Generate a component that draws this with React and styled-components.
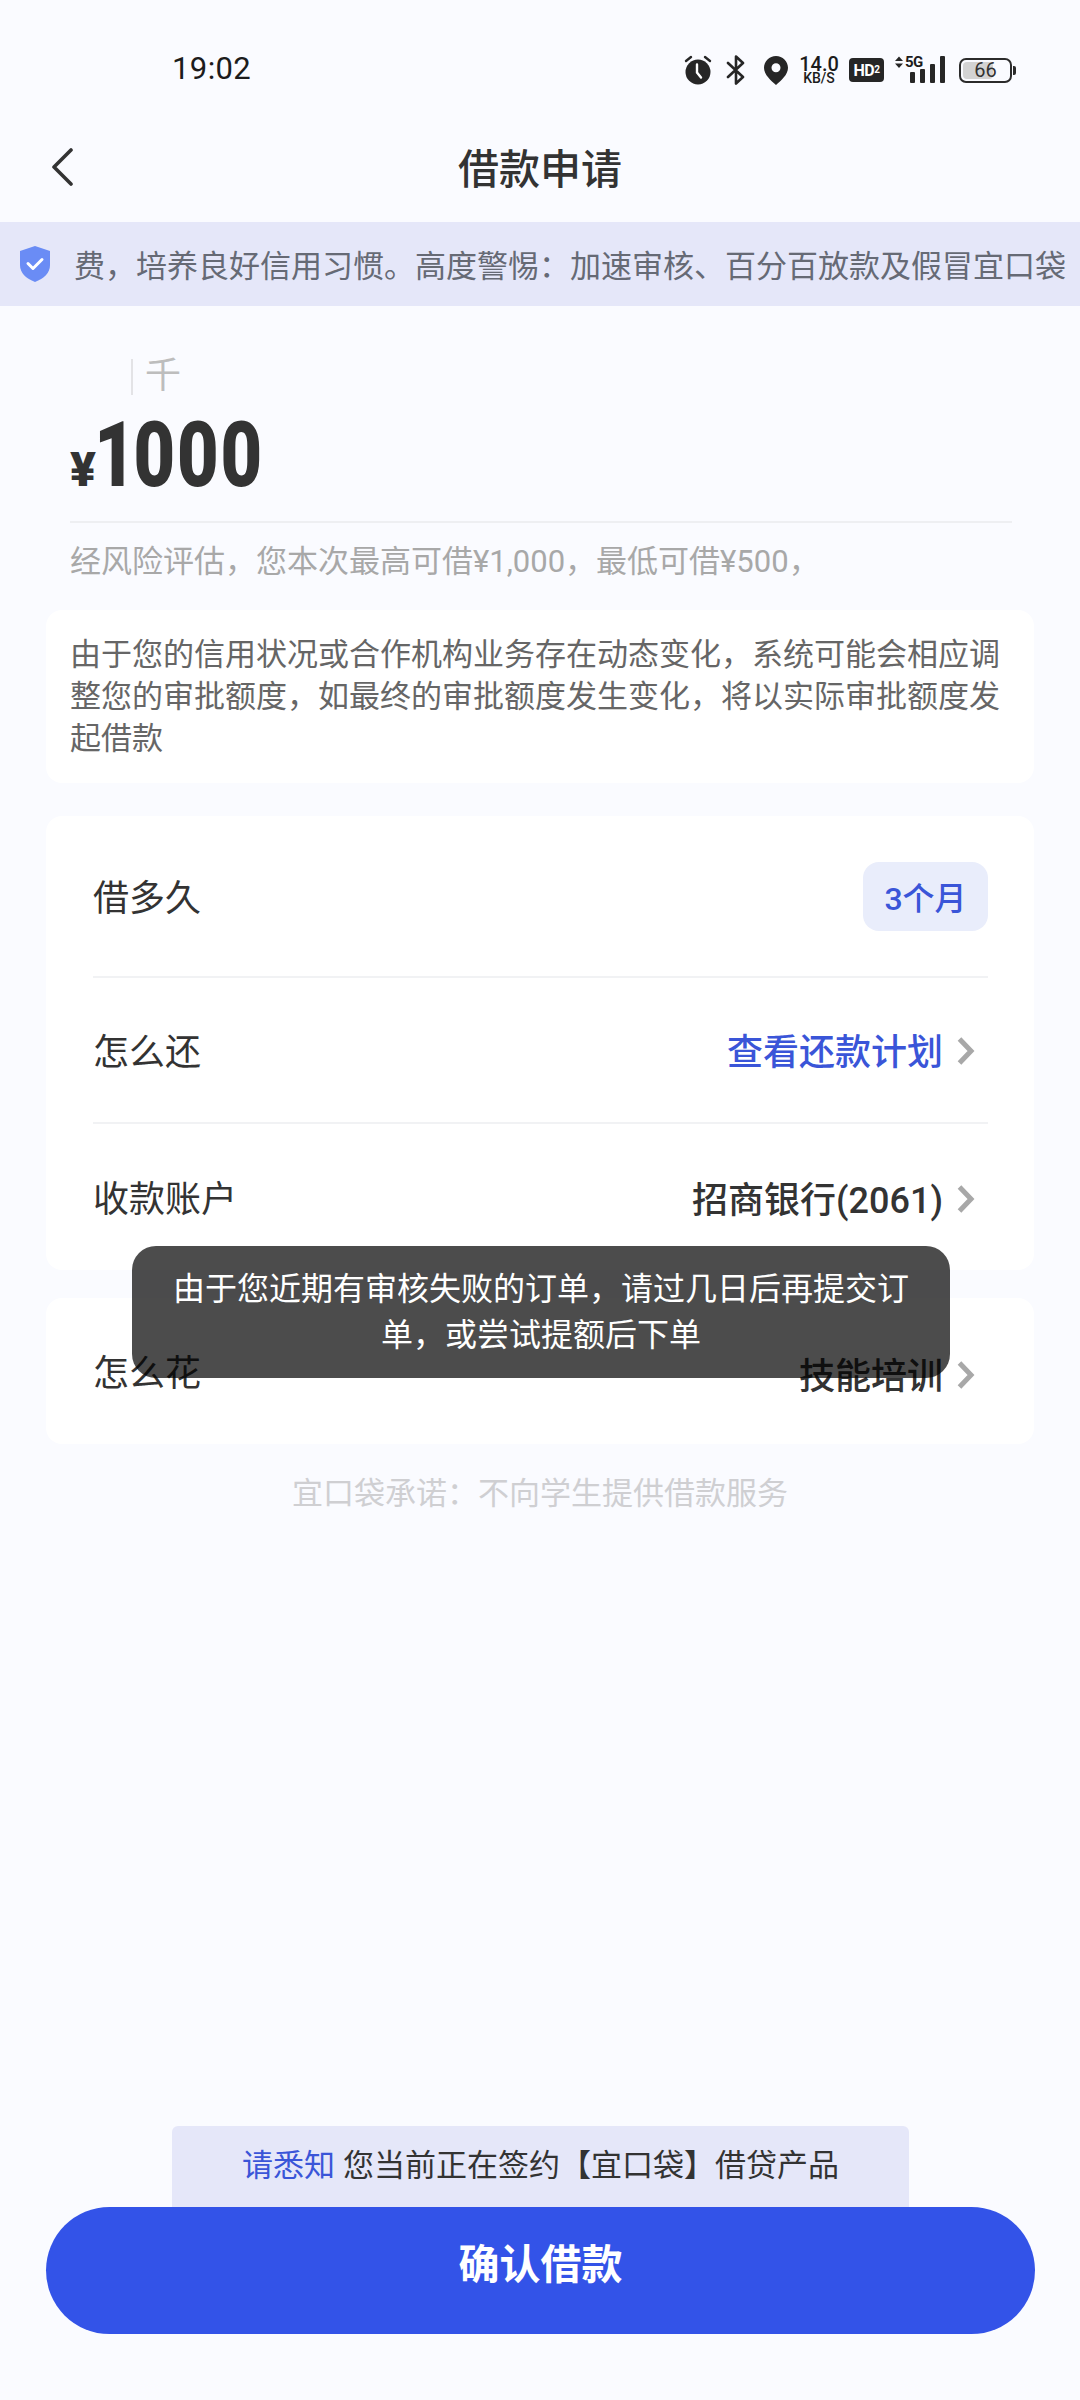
import React from "react";
import styled, { createGlobalStyle } from "styled-components";

const Global = createGlobalStyle`
  html, body { margin: 0; padding: 0; background: #fafbff; }
  * { box-sizing: border-box; }
  body { font-family: Roboto, "Noto Sans CJK SC", sans-serif; }
`;

const Page = styled.div`
  width: 1080px;
  height: 2400px;
  position: relative;
  overflow: hidden;
  display: flex;
  flex-direction: column;
  background: #fafbff;
`;

const StatusBar = styled.div`
  height: 112px;
  padding: 28px 64px 0 172px;
  display: flex;
  align-items: center;
  justify-content: space-between;
  color: #1c1c1c;
`;
const Time = styled.div`
  font-size: 31px;
  font-weight: 400;
  letter-spacing: 0.4px;
  padding-bottom: 3px;
`;
const StatusIcons = styled.div`
  display: flex;
  align-items: center;
  height: 30px;
`;
const Speed = styled.div`
  width: 40px;
  margin: 0 10px 0 11px;
  display: flex;
  flex-direction: column;
  align-items: center;
  font-weight: 500;
  line-height: 1;
`;
const SpeedValue = styled.span`
  font-size: 20px;
  line-height: 16px;
`;
const SpeedUnit = styled.span`
  font-size: 14px;
  line-height: 13px;
`;
const HdBadge = styled.div`
  width: 35px;
  height: 24px;
  margin-right: 11px;
  border-radius: 4px;
  background: #262626;
  color: #fff;
  display: flex;
  align-items: center;
  justify-content: center;
  font-size: 16px;
  font-weight: 700;
  letter-spacing: -0.5px;
  sub {
    font-size: 10px;
    line-height: 1;
    vertical-align: -1px;
  }
`;
const Signal = styled.div`
  width: 50px;
  height: 28px;
  margin-right: 14px;
  position: relative;
`;
const FiveG = styled.span`
  position: absolute;
  left: 10px;
  top: -1px;
  font-size: 15px;
  line-height: 14px;
  font-weight: 700;
  letter-spacing: -0.5px;
`;
const Battery = styled.div`
  width: 53px;
  height: 25px;
  border: 2px solid #2b2b2b;
  border-radius: 7px;
  padding: 2px;
  position: relative;
  margin-right: 4px;
  &::after {
    content: "";
    position: absolute;
    right: -6px;
    top: 6px;
    width: 3px;
    height: 9px;
    background: #2b2b2b;
    border-radius: 0 2px 2px 0;
  }
`;
const BatteryFill = styled.div`
  height: 100%;
  border-radius: 4px;
  background: #d3d3d3;
`;
const BatteryText = styled.span`
  position: absolute;
  left: 0;
  right: 0;
  top: 0;
  text-align: center;
  font-size: 20px;
  line-height: 21px;
  color: #333;
`;

const Nav = styled.div`
  height: 110px;
  position: relative;
  display: flex;
  align-items: center;
  justify-content: center;
`;
const BackIcon = styled.svg`
  position: absolute;
  left: 50px;
  top: 36px;
`;
const Title = styled.div`
  font-size: 41px;
  font-weight: 500;
  color: #333;
  padding-bottom: 3px;
`;

const Banner = styled.div`
  height: 84px;
  background: #e5e7f9;
  display: flex;
  align-items: center;
  padding-left: 20px;
  gap: 24px;
  overflow: hidden;
  white-space: nowrap;
`;
const BannerText = styled.div`
  font-size: 31px;
  color: #666a75;
  flex: none;
  padding-bottom: 2px;
`;

const AmountBlock = styled.div`
  padding: 52px 68px 0 70px;
`;
const Tabs = styled.div`
  height: 37px;
  display: flex;
  align-items: center;
  padding-left: 61px;
  gap: 12px;
`;
const TabCursor = styled.div`
  width: 2px;
  height: 36px;
  background: #e3e3e6;
`;
const TabLabel = styled.div`
  font-size: 36px;
  line-height: 37px;
  color: #bdbdbd;
`;
const Amount = styled.div`
  height: 100px;
  margin-top: 11px;
  display: flex;
  align-items: baseline;
  color: #333;
  font-weight: 900;
`;
const Currency = styled.span`
  font-size: 48px;
  line-height: 100px;
`;
const AmountValue = styled.span`
  font-size: 90px;
  line-height: 100px;
  letter-spacing: 0.5px;
  font-variant-numeric: proportional-nums;
  transform: scaleX(0.8);
  transform-origin: left center;
`;
const Rule = styled.div`
  height: 2px;
  margin-top: 15px;
  background: #eeeff2;
`;
const Info = styled.div`
  margin-top: 19px;
  font-size: 31px;
  line-height: 40px;
  color: #a8a8a8;
  white-space: nowrap;
`;

const Card = styled.div`
  margin: ${(p) => p.$top}px 46px 0 46px;
  background: #fff;
  border-radius: 16px;
  position: relative;
`;
const Notice = styled.div`
  padding: 24px 24px 24px;
  font-size: 31px;
  line-height: 42px;
  color: #666;
  height: 173px;
`;
const Row = styled.div`
  height: ${(p) => p.$h}px;
  margin: 0 46px 0 47px;
  display: flex;
  align-items: center;
  justify-content: space-between;
  border-bottom: ${(p) => (p.$line ? "2px solid #f1f2f4" : "0")};
`;
const Label = styled.div`
  font-size: 36px;
  color: #333;
  padding-bottom: 3px;
`;
const Value = styled.div`
  display: flex;
  align-items: center;
  gap: 14px;
  padding: ${(p) => (p.$shift > 0 ? p.$shift : 0)}px 13px ${(p) => (p.$shift < 0 ? -p.$shift : 0)}px 0;
  font-size: 36px;
  font-weight: 500;
  color: ${(p) => p.$color || "#333"};
  svg {
    margin-top: 4px;
  }
`;
const Chip = styled.div`
  width: 125px;
  height: 69px;
  border-radius: 16px;
  background: #e9edfb;
  color: #3a55d8;
  font-size: 32px;
  font-weight: 500;
  display: flex;
  align-items: center;
  justify-content: center;
`;
const Toast = styled.div`
  position: absolute;
  left: 132px;
  top: 1246px;
  width: 818px;
  height: 132px;
  padding: 20px 40px;
  background: rgba(0, 0, 0, 0.7);
  border-radius: 24px;
  color: #fff;
  font-size: 32px;
  line-height: 46px;
  text-align: center;
`;
const Promise = styled.div`
  margin-top: 29px;
  text-align: center;
  font-size: 31px;
  line-height: 42px;
  color: #cfcfd2;
`;

const Footer = styled.div`
  margin-top: auto;
  padding: 0 45px 66px 46px;
  display: flex;
  flex-direction: column;
  align-items: center;
`;
const Consent = styled.div`
  width: 737px;
  height: 81px;
  padding-bottom: 8px;
  background: #e5e7f9;
  border-radius: 6px 6px 0 0;
  display: flex;
  align-items: center;
  justify-content: center;
  font-size: 31px;
  color: #333;
  gap: 8px;
`;
const ConsentLink = styled.span`
  color: #3a55d8;
`;
const SubmitButton = styled.button`
  width: 100%;
  height: 127px;
  border: 0;
  padding: 0 0 20px;
  border-radius: 64px;
  background: #3353e8;
  color: #fff;
  font-family: inherit;
  font-size: 41px;
  font-weight: 700;
`;

const Chevron = () => (
  <svg width="18" height="28" viewBox="0 0 18 28" fill="none">
    <path d="M2.500 2L14 14 2.500 26" stroke="#a8a8a8" strokeWidth="5" />
  </svg>
);

const Alarm = () => (
  <svg width="28" height="30" viewBox="0 0 28 30" style={{ marginRight: 14 }}>
    <circle cx="14" cy="17" r="12.500" fill="#262626" />
    <path d="M2 6l5-4M26 6l-5-4" stroke="#262626" strokeWidth="2.400" strokeLinecap="round" />
    <path d="M13 9.500v8l4 5" stroke="#fff" strokeWidth="2.400" fill="none" strokeLinecap="round" />
  </svg>
);
const Bluetooth = () => (
  <svg width="20" height="30" viewBox="0 0 20 30" style={{ marginRight: 18 }}>
    <path d="M2 8l15 14-7 6.500V1.500L17 8 2 22" fill="none" stroke="#262626" strokeWidth="2.600" strokeLinejoin="round" strokeLinecap="round" />
  </svg>
);
const Pin = () => (
  <svg width="24" height="29" viewBox="0 0 24 29">
    <path fillRule="evenodd" d="M12 0C5.400 0 0 5.200 0 11.800 0 19 7 24.500 12 29c5-4.500 12-10 12-17.200C24 5.200 18.600 0 12 0zm0 7.300a4.500 4.500 0 1 1 0 9 4.500 4.500 0 0 1 0-9z" fill="#262626" />
  </svg>
);
const SignalArt = () => (
  <svg width="50" height="28" viewBox="0 0 50 28" style={{ position: "absolute", left: 0, top: 0 }}>
    <path d="M0 5l4-4.500L8 5zM0 7.500l4 4.500 4-4.500z" fill="#262626" />
    <rect x="15" y="16" width="5" height="11" rx="1" fill="#262626" />
    <rect x="25" y="13" width="5" height="14" rx="1" fill="#262626" />
    <rect x="35" y="8" width="5" height="19" rx="1" fill="#262626" />
    <rect x="45" y="0" width="5" height="27" rx="1" fill="#262626" />
  </svg>
);

const Shield = () => (
  <svg width="30" height="36" viewBox="0 0 30 36" style={{ flex: "none" }}>
    <path d="M15 0l15 5v14c0 8-6 13.500-15 17C6 32.500 0 27 0 19V5z" fill="#6a8cf5" />
    <path d="M8 17.500l5 5 9-9" fill="none" stroke="#fff" strokeWidth="3" strokeLinecap="round" strokeLinejoin="round" />
  </svg>
);

export default function App() {
  return (
    <Page>
      <Global />
      <StatusBar>
        <Time>19:02</Time>
        <StatusIcons>
          <Alarm />
          <Bluetooth />
          <Pin />
          <Speed>
            <SpeedValue>14.0</SpeedValue>
            <SpeedUnit>KB/S</SpeedUnit>
          </Speed>
          <HdBadge>
            HD<sub>2</sub>
          </HdBadge>
          <Signal>
            <SignalArt />
            <FiveG>5G</FiveG>
          </Signal>
          <Battery>
            <BatteryFill style={{ width: "66%" }} />
            <BatteryText>66</BatteryText>
          </Battery>
        </StatusIcons>
      </StatusBar>
      <Nav>
        <BackIcon width="24" height="38" viewBox="0 0 24 38" fill="none">
          <path d="M21 2L4 19l17 17" stroke="#333" strokeWidth="3.600" strokeLinecap="round" strokeLinejoin="round" />
        </BackIcon>
        <Title>借款申请</Title>
      </Nav>
      <Banner>
        <Shield />
        <BannerText>费，培养良好信用习惯。高度警惕：加速审核、百分百放款及假冒宜口袋</BannerText>
      </Banner>
      <AmountBlock>
        <Tabs>
          <TabCursor />
          <TabLabel>千</TabLabel>
        </Tabs>
        <Amount>
          <Currency>¥</Currency>
          <AmountValue>1000</AmountValue>
        </Amount>
        <Rule />
        <Info>经风险评估，您本次最高可借¥1,000，最低可借¥500，</Info>
      </AmountBlock>
      <Card $top={28}>
        <Notice>由于您的信用状况或合作机构业务存在动态变化，系统可能会相应调整您的审批额度，如最终的审批额度发生变化，将以实际审批额度发起借款</Notice>
      </Card>
      <Card $top={33}>
        <Row $h={162} $line>
          <Label>借多久</Label>
          <Chip>3个月</Chip>
        </Row>
        <Row $h={146} $line>
          <Label>怎么还</Label>
          <Value $color="#3a55d8" $shift={-3}>
            查看还款计划
            <Chevron />
          </Value>
        </Row>
        <Row $h={146}>
          <Label>收款账户</Label>
          <Value $shift={0}>
            招商银行(2061)
            <Chevron />
          </Value>
        </Row>
      </Card>
      <Card $top={28}>
        <Row $h={146}>
          <Label>怎么花</Label>
          <Value $shift={4}>
            技能培训
            <Chevron />
          </Value>
        </Row>
      </Card>
      <Promise>宜口袋承诺：不向学生提供借款服务</Promise>
      <Footer>
        <Consent>
          <ConsentLink>请悉知</ConsentLink>
          <span>您当前正在签约【宜口袋】借贷产品</span>
        </Consent>
        <SubmitButton>确认借款</SubmitButton>
      </Footer>
      <Toast>由于您近期有审核失败的订单，请过几日后再提交订单，或尝试提额后下单</Toast>
    </Page>
  );
}
